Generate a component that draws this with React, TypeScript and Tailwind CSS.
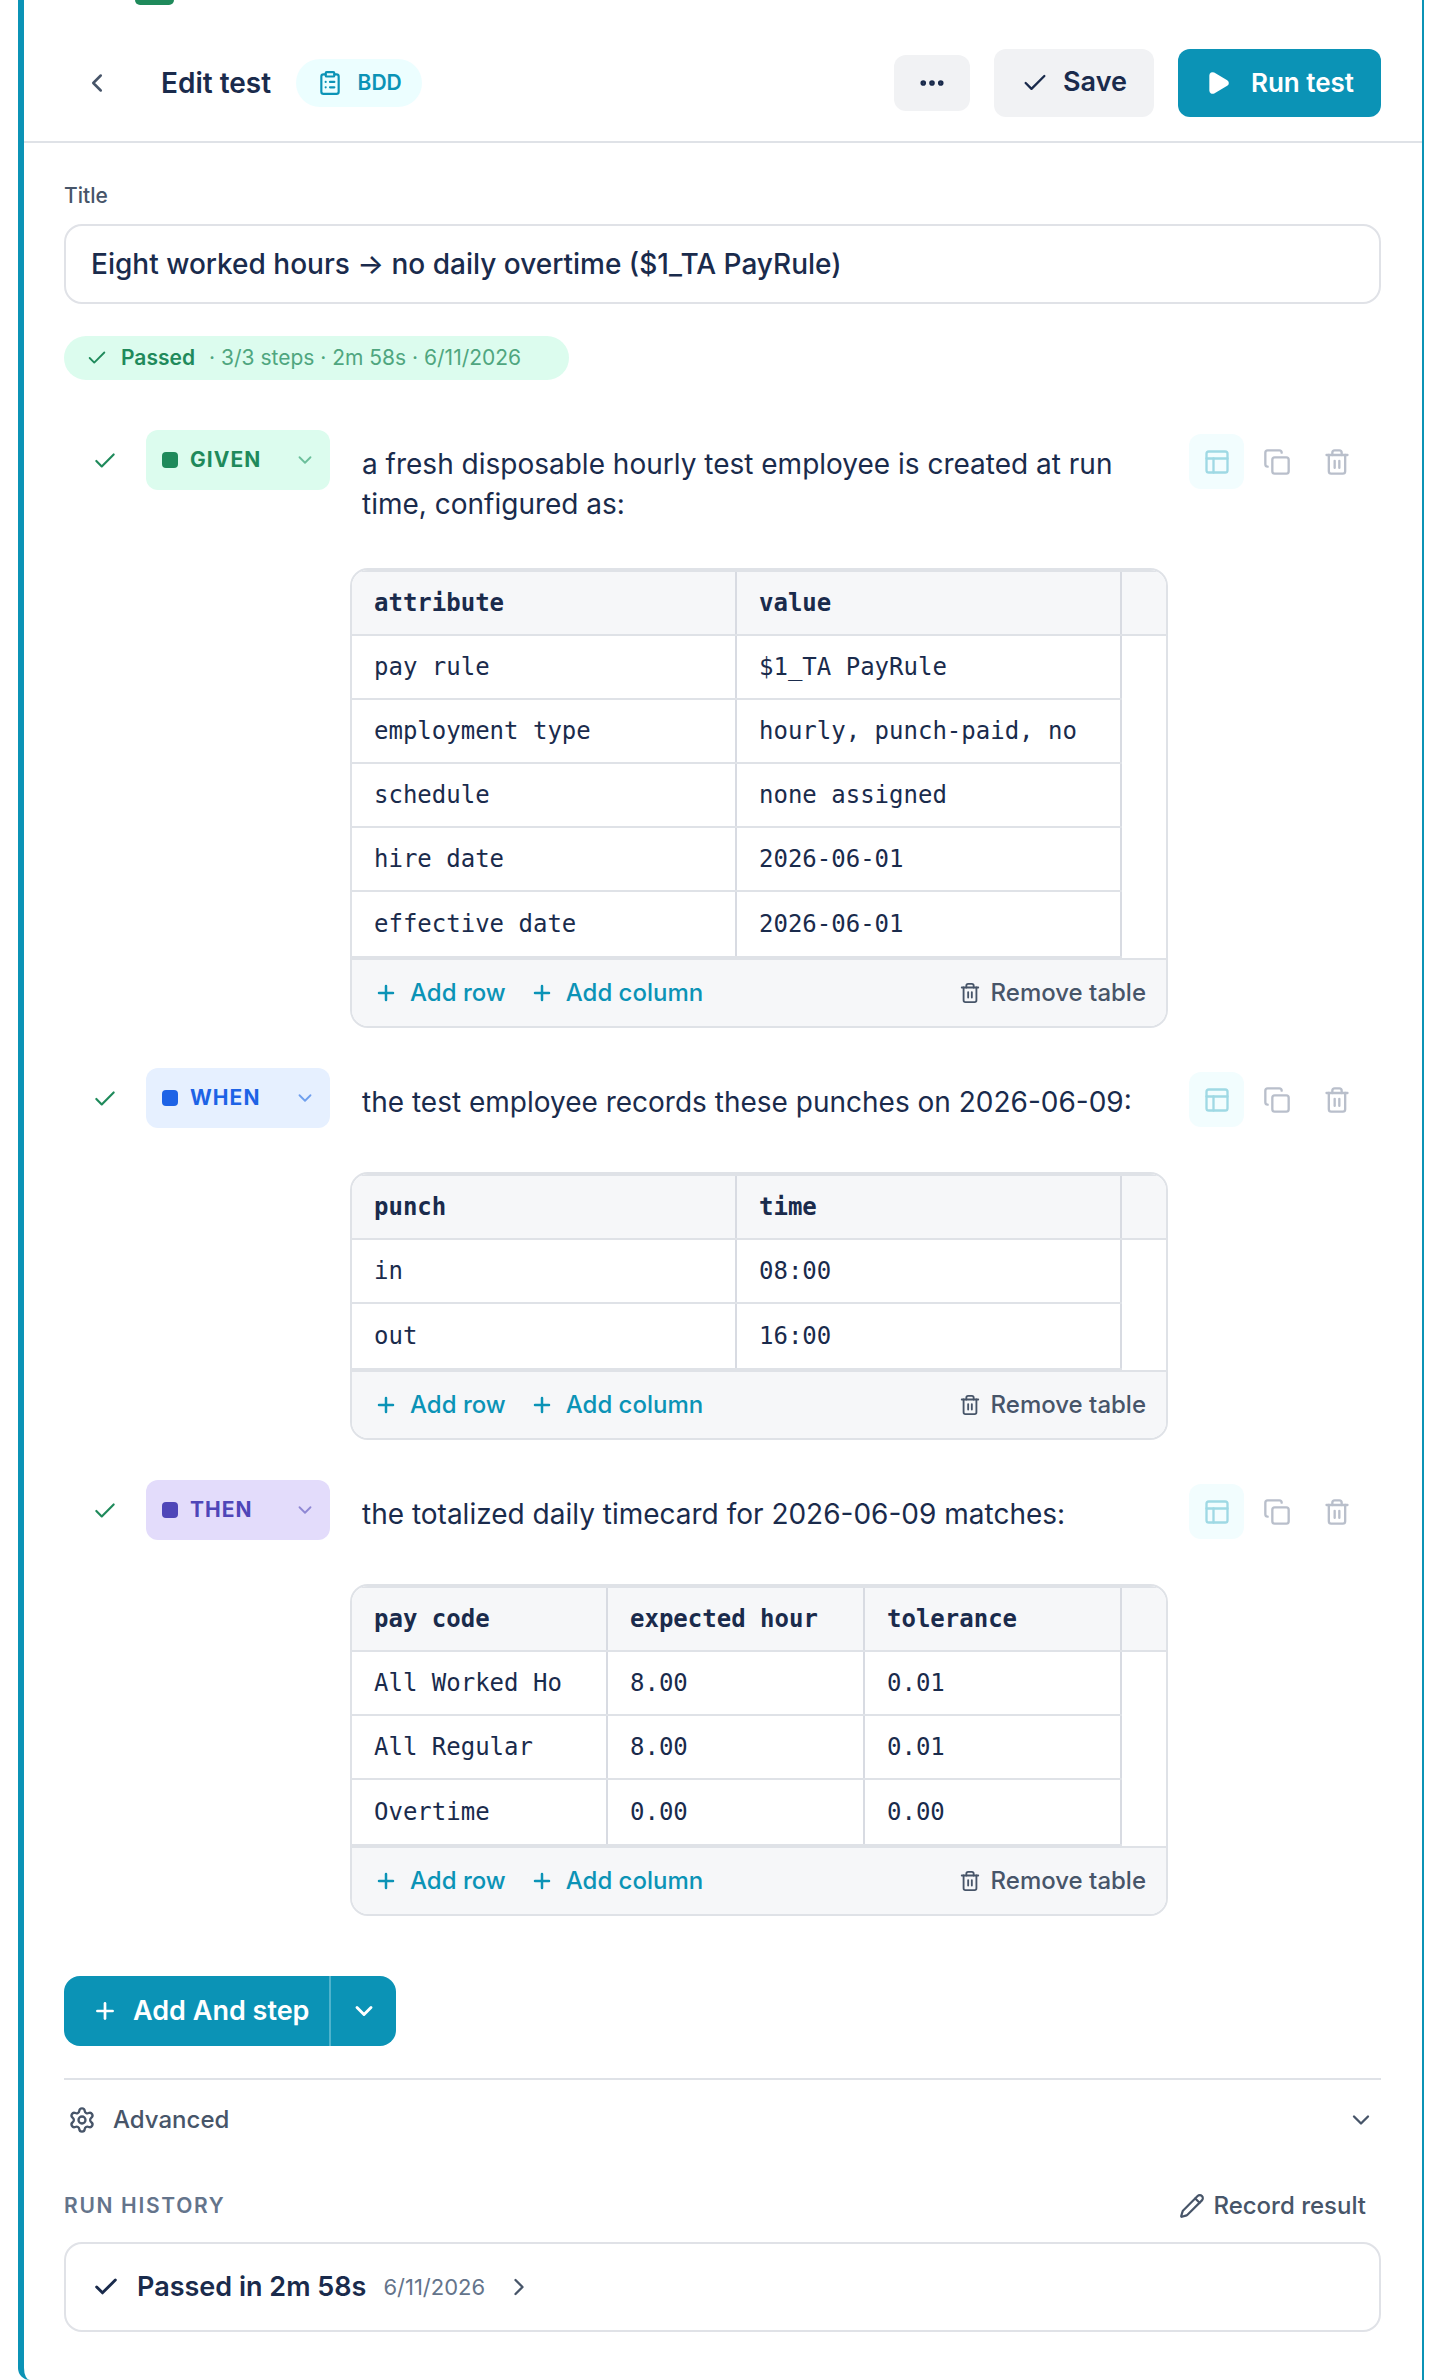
import React from 'react';
import {
  Check,
  ChevronDown,
  ChevronLeft,
  ChevronRight,
  ClipboardList,
  Copy,
  Ellipsis,
  PanelsTopLeft,
  Pencil,
  Play,
  Plus,
  Settings,
  Trash2,
} from 'lucide-react';

type Tone = {
  label: string;
  badge: string;
  dot: string;
  text: string;
  chevron: string;
};

const given: Tone = {
  label: 'GIVEN',
  badge: 'bg-[#dcfcee]',
  dot: 'bg-[#1f8a5b]',
  text: 'text-[#1f8a5b]',
  chevron: 'text-[#6cbf9b]',
};
const when: Tone = {
  label: 'WHEN',
  badge: 'bg-[#e6f0ff]',
  dot: 'bg-[#1d63e6]',
  text: 'text-[#1d63e6]',
  chevron: 'text-[#6f9fee]',
};
const then: Tone = {
  label: 'THEN',
  badge: 'bg-[#e3dcfb]',
  dot: 'bg-[#4f46b8]',
  text: 'text-[#4f46b8]',
  chevron: 'text-[#8f88d4]',
};

function DataTable({ widths, head, rows }: { widths: string[]; head: string[]; rows: string[][] }) {
  return (
    <div className="ml-[286px] mt-[44px] w-[818px] overflow-hidden rounded-[18px] border-2 border-[#dfe2e7]">
      <div className="flex h-[66px] border-y-2 border-[#dfe2e7] bg-[#f6f7f9] font-bold">
        {head.map((h, i) => (
          <div key={h} className={`${widths[i]} flex items-center border-r-2 border-[#d8dbe2] px-[22px]`}>
            {h}
          </div>
        ))}
      </div>
      {rows.map((row, r) => (
        <div
          key={row[0]}
          className={`flex w-[770px] border-b-2 border-[#dfe2e7] ${r === rows.length - 1 ? 'h-[66px]' : 'h-[64px]'}`}
        >
          {row.map((cell, i) => (
            <div key={i} className={`${widths[i]} flex items-center border-r-2 border-[#d8dbe2] px-[22px] whitespace-nowrap overflow-hidden`}>
              {cell}
            </div>
          ))}
        </div>
      ))}
      <div className="flex h-[68px] items-center justify-between border-t-2 border-[#dfe2e7] bg-[#f6f7f9] pl-[22px] pr-[20px] font-['Inter',sans-serif] text-[24px] font-medium">
        <div className="flex items-center text-[#0b93b6]">
          <Plus size={24} strokeWidth={2.5} />
          <span className="ml-[12px]">Add row</span>
          <Plus size={24} strokeWidth={2.5} className="ml-[24px]" />
          <span className="ml-[12px]">Add column</span>
        </div>
        <div className="flex items-center text-[#475569]">
          <Trash2 size={22} />
          <span className="ml-[10px]">Remove table</span>
        </div>
      </div>
    </div>
  );
}

function StepRow({ tone, children }: { tone: Tone; children: React.ReactNode }) {
  return (
    <div className="flex items-start">
      <Check size={26} strokeWidth={2} className="ml-[28px] mt-[18px] text-[#1f8a5b]" />
      <div className={`ml-[28px] flex h-[60px] w-[184px] items-center rounded-[12px] pl-[16px] ${tone.badge}`}>
        <span className={`h-[16px] w-[16px] rounded-[4px] ${tone.dot}`} />
        <span className={`ml-[12px] w-[104px] text-[21px] font-bold tracking-[0.05em] ${tone.text}`}>{tone.label}</span>
        <ChevronDown size={22} className={tone.chevron} />
      </div>
      <div className="ml-[32px] mt-[14px] w-[780px] text-[28px] leading-[40px]">{children}</div>
      <div className="ml-[47px] mt-[4px] flex gap-[5px]">
        <button className="flex h-[55px] w-[55px] items-center justify-center rounded-[12px] bg-[#f2fdfe] text-[#9fd9e4]">
          <PanelsTopLeft size={28} />
        </button>
        <button className="flex h-[55px] w-[55px] items-center justify-center text-[#b9bfcb]">
          <Copy size={28} />
        </button>
        <button className="flex h-[55px] w-[55px] items-center justify-center text-[#b9bfcb]">
          <Trash2 size={28} />
        </button>
      </div>
    </div>
  );
}

export default function App() {
  return (
    <div className="relative h-[2380px] w-[1446px] overflow-hidden bg-white font-['Inter',sans-serif] text-[#1a2b4c]">
      {/* sliver of the launcher above the panel */}
      <div className="absolute left-[135px] top-0 h-[5px] w-[39px] rounded-b-[6px] bg-[#1f8a5b]" />

      <div className="ml-[18px] h-[2380px] w-[1406px] rounded-bl-[12px] border-l-[6px] border-r-2 border-[#0b93b6]">
        <header className="flex h-[143px] items-center border-b-2 border-[#dfe2e7] pl-[58px] pr-[41px] pt-[24px]">
          <ChevronLeft size={30} strokeWidth={2} className="text-[#475569]" />
          <h1 className="ml-[49px] text-[28px] font-semibold">Edit test</h1>
          <div className="ml-[25px] flex h-[48px] w-[126px] items-center justify-center gap-[15px] rounded-full bg-[#ecfeff] text-[21px] font-semibold text-[#0b93b6]">
            <ClipboardList size={26} />
            <span>BDD</span>
          </div>
          <button className="ml-auto flex h-[56px] w-[76px] items-center justify-center rounded-[12px] bg-[#f1f2f4]">
            <Ellipsis size={30} strokeWidth={2.5} />
          </button>
          <button className="ml-[24px] flex h-[68px] w-[160px] items-center justify-center gap-[14px] rounded-[12px] bg-[#f1f2f4] text-[27px] font-semibold">
            <Check size={28} strokeWidth={2} />
            <span>Save</span>
          </button>
          <button className="ml-[24px] flex h-[68px] w-[203px] items-center justify-center gap-[20px] rounded-[12px] bg-[#0b93b6] text-[26px] font-semibold text-white">
            <Play size={26} fill="currentColor" />
            <span>Run test</span>
          </button>
        </header>

        <main className="pl-[40px] pr-[41px]">
          <label className="mt-[39px] block text-[21px] font-medium leading-[28px] text-[#475569]">Title</label>
          <div className="mt-[14px] flex h-[80px] items-center rounded-[18px] border-2 border-[#e0e2e7] pl-[25px] text-[28px] font-medium">
            Eight worked hours → no daily overtime ($1_TA PayRule)
          </div>

          <div className="mt-[32px] flex h-[44px] w-[505px] items-center rounded-full bg-[#dcfcee] pl-[22px] text-[21px]">
            <Check size={22} strokeWidth={2} className="text-[#1f8a5b]" />
            <span className="ml-[13px] font-semibold text-[#1f8a5b]">Passed</span>
            <span className="ml-[14px] text-[#4fa67f]">· 3/3 steps · 2m 58s · 6/11/2026</span>
          </div>

          <div className="mt-[50px] font-['DejaVu_Sans_Mono',monospace] text-[24px]">
            <div className="font-['Inter',sans-serif]">
              <StepRow tone={given}>a fresh disposable hourly test employee is created at run time, configured as:</StepRow>
            </div>
            <DataTable
              widths={['w-[385px]', 'w-[385px]']}
              head={['attribute', 'value']}
              rows={[
                ['pay rule', '$1_TA PayRule'],
                ['employment type', 'hourly, punch-paid, no'],
                ['schedule', 'none assigned'],
                ['hire date', '2026-06-01'],
                ['effective date', '2026-06-01'],
              ]}
            />

            <div className="mt-[40px] font-['Inter',sans-serif]">
              <StepRow tone={when}>the test employee records these punches on 2026-06-09:</StepRow>
            </div>
            <DataTable
              widths={['w-[385px]', 'w-[385px]']}
              head={['punch', 'time']}
              rows={[
                ['in', '08:00'],
                ['out', '16:00'],
              ]}
            />

            <div className="mt-[40px] font-['Inter',sans-serif]">
              <StepRow tone={then}>the totalized daily timecard for 2026-06-09 matches:</StepRow>
            </div>
            <DataTable
              widths={['w-[256px]', 'w-[257px]', 'w-[257px]']}
              head={['pay code', 'expected hour', 'tolerance']}
              rows={[
                ['All Worked Ho', '8.00', '0.01'],
                ['All Regular', '8.00', '0.01'],
                ['Overtime', '0.00', '0.00'],
              ]}
            />
          </div>

          <div className="mt-[60px] flex h-[70px] w-[332px] items-center rounded-[16px] bg-[#0b93b6] text-white">
            <div className="flex h-full w-[267px] items-center border-r-2 border-[#4fb3cc] pl-[28px] text-[27px] font-semibold">
              <Plus size={26} strokeWidth={2.5} />
              <span className="ml-[15px]">Add And step</span>
            </div>
            <div className="flex flex-1 items-center justify-center">
              <ChevronDown size={28} strokeWidth={2.5} />
            </div>
          </div>

          <div className="mt-[32px] flex h-[82px] items-center border-t-2 border-[#dfe2e7] pl-[4px] pr-[6px] text-[#475569]">
            <Settings size={28} />
            <span className="ml-[17px] text-[24px] font-medium">Advanced</span>
            <ChevronDown size={28} className="ml-auto" />
          </div>

          <div className="mt-[26px] flex h-[40px] items-center pr-[15px]">
            <span className="text-[21px] font-semibold tracking-[0.08em] text-[#64748b]">RUN HISTORY</span>
            <div className="ml-auto flex items-center gap-[8px] text-[24px] font-medium text-[#475569]">
              <Pencil size={26} />
              <span>Record result</span>
            </div>
          </div>

          <div className="mt-[16px] flex h-[90px] items-center rounded-[18px] border-2 border-[#e0e2e7] pl-[26px]">
            <Check size={28} strokeWidth={2.5} />
            <span className="ml-[17px] text-[27px] font-semibold">Passed in 2m 58s</span>
            <span className="ml-[17px] text-[22px] text-[#64748b]">6/11/2026</span>
            <ChevronRight size={28} className="ml-[20px] text-[#475569]" />
          </div>
        </main>
      </div>
    </div>
  );
}
